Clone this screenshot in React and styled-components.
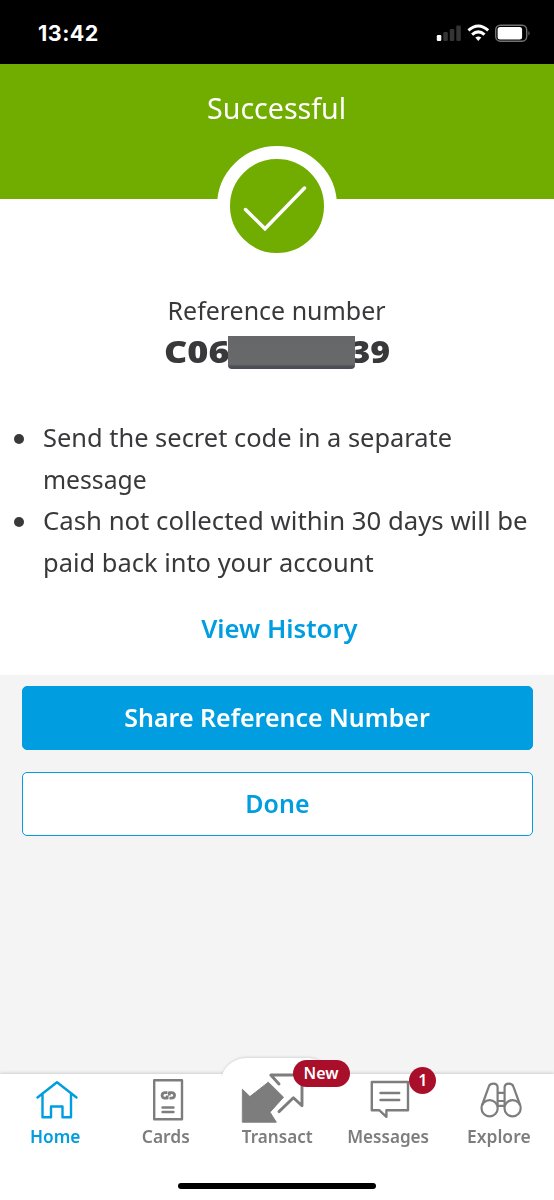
import React from "react";
import styled, { createGlobalStyle, css } from "styled-components";

const GlobalStyle = createGlobalStyle`
  * { box-sizing: border-box; }
  body { margin: 0; background: #f4f4f4; }
  button { font: inherit; }
`;

const color = {
  green: "#70ad00",
  blue: "#009de0",
  ink: "#39393b",
  grey: "#7d7d7d",
  red: "#a90e2a",
};

const Screen = styled.div`
  width: 554px;
  height: 1200px;
  display: flex;
  flex-direction: column;
  background: #f4f4f4;
  color: ${color.ink};
  font-family: "Noto Sans", "Open Sans", sans-serif;
  overflow: hidden;
`;

const Fit = styled.span`
  display: inline-block;
  white-space: nowrap;
  transform: scaleX(${(p) => p.$x});
  transform-origin: ${(p) => p.$origin || "center"};
`;

const StatusBar = styled.header`
  height: 64px;
  flex: none;
  display: flex;
  align-items: center;
  justify-content: space-between;
  padding: 2px 24px 0 38px;
  background: #000;
`;

const Clock = styled.time`
  color: #fff;
  font: 700 21.5px/24px Inter, sans-serif;
  letter-spacing: 0.5px;
`;

const Banner = styled.section`
  height: 135px;
  flex: none;
  position: relative;
  display: flex;
  justify-content: center;
  padding-top: 24px;
  background: ${color.green};
  color: #fff;
`;

const BannerTitle = styled.h1`
  margin: 0;
  font-size: 29px;
  font-weight: 400;
  line-height: 40px;
`;

const Seal = styled.div`
  position: absolute;
  top: 82px;
  left: 217px;
  width: 120px;
  height: 120px;
  border: 13px solid #fff;
  border-radius: 50%;
  background: ${color.green};
`;

const Details = styled.main`
  height: 476px;
  flex: none;
  display: flex;
  flex-direction: column;
  align-items: center;
  padding-top: 93px;
  background: #fff;
`;

const Caption = styled.div`
  font-size: 26px;
  line-height: 36px;
`;

const Reference = styled.div`
  display: flex;
  align-items: center;
  height: 40px;
  margin-top: 4px;
  font-size: 30px;
  font-weight: 900;
  line-height: 40px;
`;

const RefPart = styled.span`
  width: ${(p) => p.$w}px;
  display: flex;
  justify-content: ${(p) => p.$align};
`;

const Redaction = styled.span`
  width: 127px;
  height: 33px;
  border-radius: 0 0 4px 4px;
  background: linear-gradient(#666769 0, #68696a 85%, #4d4e53 93%, #494b5e 100%);
  z-index: 1;
`;

const Notes = styled.ul`
  align-self: stretch;
  margin: 45px 0 0;
  padding: 0 0 0 43px;
  list-style: none;
  font-size: 26px;
  line-height: 41.5px;
`;

const Note = styled.li`
  display: flex;
  flex-direction: column;
  align-items: flex-start;
  &::before {
    content: "";
    width: 10px;
    height: 10px;
    margin: 17px 0 -27px -29px;
    border-radius: 50%;
    background: ${color.ink};
  }
`;

const HistoryLink = styled.a`
  margin: 25px 0 0 4px;
  color: ${color.blue};
  font-size: 26px;
  font-weight: 600;
  line-height: 40px;
`;

const Actions = styled.section`
  flex: 1;
  display: flex;
  flex-direction: column;
  gap: 22px;
  padding: 11px 21.5px 0;
`;

const Action = styled.button`
  height: 64px;
  padding: 0 0 3px;
  border: 1.5px solid ${color.blue};
  border-radius: 5px;
  font-size: 26px;
  font-weight: 600;
  ${(p) => p.$primary
    ? css`background: ${color.blue}; color: #fff;`
    : css`background: #fff; color: ${color.blue};`}
`;

const Nav = styled.nav`
  height: 126px;
  flex: none;
  position: relative;
  display: grid;
  grid-template-columns: repeat(5, 1fr);
  grid-template-rows: 109px 6px;
  background: #fff;
  box-shadow: 0 -1px 3px rgba(0, 0, 0, 0.16);
`;

const Bump = styled.svg`
  position: absolute;
  left: 214px;
  top: -20px;
  path {
    fill: #fff;
    filter: drop-shadow(0 -1px 1px rgba(0, 0, 0, 0.12));
  }
`;

const Tab = styled.a`
  position: relative;
  display: flex;
  flex-direction: column;
  align-items: center;
  color: ${(p) => (p.$active ? color.blue : color.grey)};
  font-size: 18px;
  font-weight: 600;
  line-height: 25px;
  svg {
    display: block;
    height: 50px;
    width: 80px;
    flex: none;
    overflow: visible;
    fill: none;
    stroke: currentColor;
    stroke-width: 2.4;
    stroke-linecap: round;
    stroke-linejoin: round;
  }
`;

const Badge = styled.span`
  position: absolute;
  left: ${(p) => p.$left}px;
  top: ${(p) => p.$top}px;
  width: ${(p) => p.$width}px;
  height: 27px;
  display: flex;
  align-items: center;
  justify-content: center;
  border-radius: 14px;
  background: ${color.red};
  color: #fff;
  font-size: 16px;
  font-weight: 600;
`;

const HomeIndicator = styled.div`
  grid-column: 1 / -1;
  justify-self: center;
  width: 198px;
  height: 6px;
  border-radius: 3px;
  background: #000;
`;

function StatusIcons() {
  return (
    <svg width="94" height="20" viewBox="0 0 94 20">
      <rect x="0.8" y="12" width="4.5" height="6" rx="1.2" fill="#fff" />
      <rect x="7.3" y="9" width="4.5" height="9" rx="1.2" fill="#343434" />
      <rect x="13.8" y="6" width="4.5" height="12" rx="1.2" fill="#343434" />
      <rect x="20.3" y="2.5" width="4.5" height="15.5" rx="1.2" fill="#343434" />
      <g fill="none" stroke="#fff" strokeWidth="3">
        <path d="M32.4 7.3Q42.3 -1.3 52.2 7.3" />
        <path d="M36.1 11.6Q42.3 6.1 48.5 11.6" />
      </g>
      <path d="M39.3 14.6Q42.3 12.4 45.3 14.6L42.3 18Z" fill="#fff" />
      <rect x="59.7" y="2.2" width="31" height="16" rx="4.6" fill="none" stroke="#727272" strokeWidth="1.4" />
      <rect x="61.6" y="4" width="24.5" height="12.4" rx="2.5" fill="#fff" />
      <path d="M92.5 8q2 2.2 0 4.6Z" fill="#777" />
    </svg>
  );
}

const HomeIcon = () => (
  <svg viewBox="0 0 80 50">
    <path d="M22.5 23.5 42 8.3 61.5 23.5M27.5 20V43.3H36V32.5H47.5V43.3H56V20" />
  </svg>
);

const CardsIcon = () => (
  <svg viewBox="0 0 80 50">
    <path d="M28.2 6.3H56V45.2H28.2ZM36.5 33.5H47.5M36.5 38H47.5" />
    <path d="M41.5 18.6H39.3C35 18.6 35.2 24.2 38.8 24.2H41.2V21.4M43.4 21.6V18.6H45.6C49.8 18.6 49.4 24.2 45.2 24.2H43.5" strokeWidth="2.8" strokeLinecap="butt" />
  </svg>
);

const TransactIcon = () => (
  <svg viewBox="0 0 80 50">
    <path d="M5.7 15.6 12.9 22.6 31.3 8.2 46.5 23.2 33 38.2 39.3 48.2H5.7Z" fill="currentColor" strokeWidth="1" />
    <path d="M42 10 33.8 1H65V31.8L56.4 23.8 42 37.6" strokeWidth="2.9" />
  </svg>
);

const MessagesIcon = () => (
  <svg viewBox="0 0 80 50">
    <path d="M23.8 8H60V36.2H38.4V42.8L31.2 36.2H23.8ZM32.5 19H51.2M32.5 26H51.2" />
  </svg>
);

const ExploreIcon = () => (
  <svg viewBox="0 0 80 50">
    <g strokeWidth="2.2">
      <circle cx="30.6" cy="34.2" r="8.1" />
      <circle cx="53.6" cy="34.2" r="8.1" />
      <path d="M23.3 30.5 29.8 12.6C31 8.8 38.2 8.4 38.6 13.2V32.5M60.9 30.5 54.4 12.6C53.2 8.8 46 8.4 45.6 13.2V32.5M38.6 18.8H45.6M38.6 27H45.6M38.6 31.8H45.6" />
    </g>
  </svg>
);

export default function App() {
  return (
    <Screen>
      <GlobalStyle />
      <StatusBar>
        <Clock>13:42</Clock>
        <StatusIcons />
      </StatusBar>
      <Banner>
        <BannerTitle><Fit $x={0.985}>Successful</Fit></BannerTitle>
        <Seal>
          <svg width="94" height="94" viewBox="0 0 94 94" fill="none" stroke="#fff" strokeWidth="3.5" strokeLinecap="round">
            <path d="M15.5 50.5 35 69.7 74.5 29" />
          </svg>
        </Seal>
      </Banner>
      <Details>
        <Caption><Fit $x={0.96}>Reference number</Fit></Caption>
        <Reference>
          <RefPart $w={64} $align="flex-start"><Fit $x={1.2} $origin="left">C06</Fit></RefPart>
          <Redaction />
          <RefPart $w={36} $align="flex-end"><Fit $x={1.13} $origin="right">39</Fit></RefPart>
        </Reference>
        <Notes>
          <Note>
            <Fit $x={0.978} $origin="left">Send the secret code in a separate</Fit>
            <Fit $x={0.95} $origin="left">message</Fit>
          </Note>
          <Note>
            <Fit $x={0.99} $origin="left">Cash not collected within 30 days will be</Fit>
            <Fit $x={0.979} $origin="left">paid back into your account</Fit>
          </Note>
        </Notes>
        <HistoryLink><Fit $x={0.985}>View History</Fit></HistoryLink>
      </Details>
      <Actions>
        <Action $primary><Fit $x={0.96}>Share Reference Number</Fit></Action>
        <Action><Fit $x={0.96}>Done</Fit></Action>
      </Actions>
      <Nav>
        <Bump width="140" height="24" viewBox="0 0 140 24">
          <path d="M8 21C12 10 22 4 34 4H92C104 4 114 10 118 21V24H8Z" />
        </Bump>
        <Tab $active><HomeIcon /><Fit $x={0.96}>Home</Fit></Tab>
        <Tab><CardsIcon /><Fit $x={0.97}>Cards</Fit></Tab>
        <Tab><TransactIcon /><Fit $x={0.95}>Transact</Fit><Badge $left={71} $top={-14} $width={57}>New</Badge></Tab>
        <Tab><MessagesIcon /><Fit $x={0.95}>Messages</Fit><Badge $left={77} $top={-7} $width={27}>1</Badge></Tab>
        <Tab><ExploreIcon /><Fit $x={0.97}>Explore</Fit></Tab>
        <HomeIndicator />
      </Nav>
    </Screen>
  );
}
